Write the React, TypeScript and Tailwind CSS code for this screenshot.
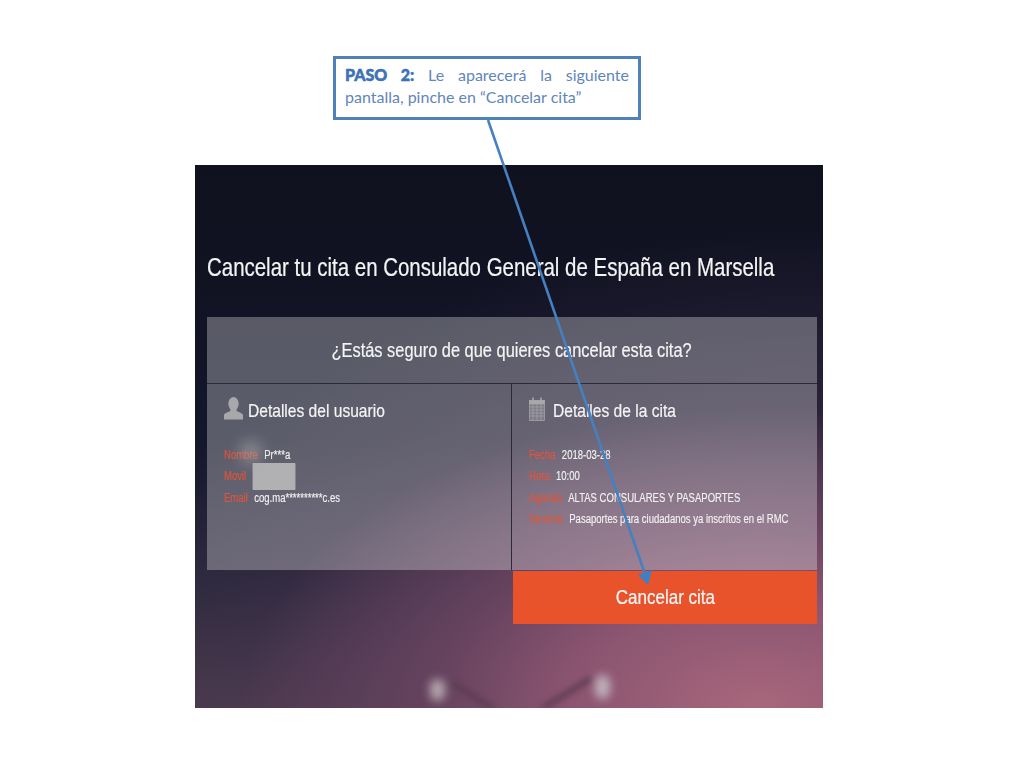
type Detail = { label: string; value: string; blocked?: boolean };

const userDetails: Detail[] = [
  { label: "Nombre", value: "Pr***a" },
  { label: "Movil", value: "", blocked: true },
  { label: "Email", value: "cog.ma**********c.es" },
];

const citaDetails: Detail[] = [
  { label: "Fecha", value: "2018-03-28" },
  { label: "Hora", value: "10:00" },
  { label: "Agenda", value: "ALTAS CONSULARES Y PASAPORTES" },
  { label: "Servicio", value: "Pasaportes para ciudadanos ya inscritos en el RMC" },
];

function DetailRow({ label, value, blocked }: Detail) {
  return (
    <div className="flex h-[21.5px] items-center gap-[8px] whitespace-nowrap text-[12px]">
      <span className="text-[#e2553a] [-webkit-text-stroke:0.15px_#e2553a]">{label}</span>
      {blocked ? (
        <span className="h-[27px] w-[54px] rounded-[1px] bg-[#b1b1b3]" />
      ) : (
        <span className="text-[#f2f2f2] [-webkit-text-stroke:0.15px_#f2f2f2]">{value}</span>
      )}
    </div>
  );
}

function UserIcon() {
  return (
    <svg width="19" height="23" viewBox="0 0 19 23" className="mb-[5px] shrink-0" fill="#a8a8ac">
      <ellipse cx="9.5" cy="6.8" rx="5.2" ry="6.8" />
      <path d="M6.6 11.5 L12.4 11.5 L12.8 14 C15 15.4 18.4 16 19 18 L19 22.5 L0 22.5 L0 18 C0.6 16 4 15.4 6.2 14 Z" />
    </svg>
  );
}

function CalendarIcon() {
  return (
    <svg width="16" height="24" viewBox="0 0 16 24" className="mb-[5px] shrink-0" fill="none" stroke="#a8a8ac" strokeWidth="0.7">
      <rect x="0.5" y="3.5" width="15" height="20" fill="#7d7b85" />
      <rect x="0.5" y="3.5" width="15" height="3.5" fill="#a8a8ac" />
      <path d="M4 0.5 V4 M12 0.5 V4" strokeWidth="1.6" />
      <path d="M0.5 10 H15.5 M0.5 13 H15.5 M0.5 16 H15.5 M0.5 19 H15.5 M4 7 V23.5 M8 7 V23.5 M12 7 V23.5" />
    </svg>
  );
}

export default function App() {
  return (
    <div className="relative h-[768px] w-[1024px] overflow-hidden bg-white font-['Liberation_Sans',sans-serif]">
      {/* paso text box */}
      <div className="absolute left-[333px] top-[56px] z-10 h-[64px] w-[308px] border-[3px] border-[#4f81bd] bg-white px-[9px] pt-[5px] font-['Lato',sans-serif] text-[16px] leading-[21.5px] text-[#5f86ba] [text-align:justify]">
        <strong className="font-black text-[#3f74b8] [-webkit-text-stroke:0.5px_#2f6cb5]">PASO 2:</strong> Le aparecerá la siguiente pantalla, pinche en “Cancelar cita”
      </div>

      <div className="pl-[195px] pt-[165px]">
        <div className="relative h-[543px] w-[628px] overflow-hidden bg-[radial-gradient(ellipse_520px_300px_at_90%_100%,#a8677c_0%,#8a5470_38%,#66435f_62%,transparent_100%),radial-gradient(ellipse_700px_480px_at_100%_100%,#4d3654_0%,transparent_100%),linear-gradient(180deg,#0f111e_0%,#14162a_50%,#2e2a3e_78%,#4a3a4e_100%)] px-[12px]">
          {/* background lights */}
          <svg className="absolute left-0 top-0 blur-[3px]" width="628" height="543" viewBox="0 0 628 543" fill="none">
            <path d="M257 518 L302 546 M397 513 L343 546" stroke="#5a3a50" strokeWidth="5" />
          </svg>
          <span className="absolute left-[235px] top-[514px] h-[22px] w-[15px] rounded-full bg-[#b5a5ad] blur-[5px]" />
          <span className="absolute left-[400px] top-[510px] h-[24px] w-[15px] rounded-full bg-[#c0b2bb] blur-[5px]" />
          <span className="absolute left-[44px] top-[275px] z-10 h-[24px] w-[24px] rounded-full bg-[#a9a9ad] opacity-50 blur-[7px]" />

          <h1 className="relative h-[152px] origin-left scale-x-[0.818] whitespace-nowrap pt-[87px] text-[25px] leading-[30px] font-normal text-[#f4f4f4] [-webkit-text-stroke:0.2px_#f4f4f4]">
            Cancelar tu cita en Consulado General de España en Marsella
          </h1>

          <div className="relative w-[610px]">
            <div className="flex h-[67px] items-center justify-center border-b border-[#2b2a38] bg-[#ffffff4d] text-[#f4f4f4]">
              <span className="inline-block scale-x-[0.82] whitespace-nowrap text-[20px] [-webkit-text-stroke:0.2px_#f4f4f4]">¿Estás seguro de que quieres cancelar esta cita?</span>
            </div>
            <div className="grid h-[186px] grid-cols-[305px_305px] bg-[#ffffff4d]">
              <div className="border-r border-[#2b2a38] pl-[17px] pt-[13px]">
                <div className="flex h-[28px] items-center gap-[5px] text-[#f4f4f4]">
                  <UserIcon />
                  <span className="inline-block origin-left scale-x-[0.82] whitespace-nowrap text-[19px] [-webkit-text-stroke:0.2px_#f4f4f4]">Detalles del usuario</span>
                </div>
                <div className="mt-[19px] origin-left scale-x-[0.794]">
                  {userDetails.map((d) => (
                    <DetailRow key={d.label} {...d} />
                  ))}
                </div>
              </div>
              <div className="pl-[17px] pt-[13px]">
                <div className="flex h-[28px] items-center gap-[8px] text-[#f4f4f4]">
                  <CalendarIcon />
                  <span className="inline-block origin-left scale-x-[0.82] whitespace-nowrap text-[19px] [-webkit-text-stroke:0.2px_#f4f4f4]">Detalles de la cita</span>
                </div>
                <div className="mt-[19px] origin-left scale-x-[0.794]">
                  {citaDetails.map((d) => (
                    <DetailRow key={d.label} {...d} />
                  ))}
                </div>
              </div>
            </div>
            <div className="mt-px flex justify-end">
              <button className="h-[53px] w-[304px] bg-[#e8532c] pb-[2px] text-[#f6f6f6]">
                <span className="inline-block scale-x-[0.85] text-[20px] [-webkit-text-stroke:0.2px_#f6f6f6]">Cancelar cita</span>
              </button>
            </div>
          </div>
        </div>
      </div>

      {/* arrow from the box down to the button */}
      <svg className="absolute left-0 top-0 z-20" width="1024" height="768" viewBox="0 0 1024 768">
        <line x1="488" y1="120" x2="645" y2="574" stroke="#4580c0" strokeWidth="2.6" />
        <path d="M648 585 L638 575 L652 570 Z" fill="#3f7fc4" />
      </svg>
    </div>
  );
}
